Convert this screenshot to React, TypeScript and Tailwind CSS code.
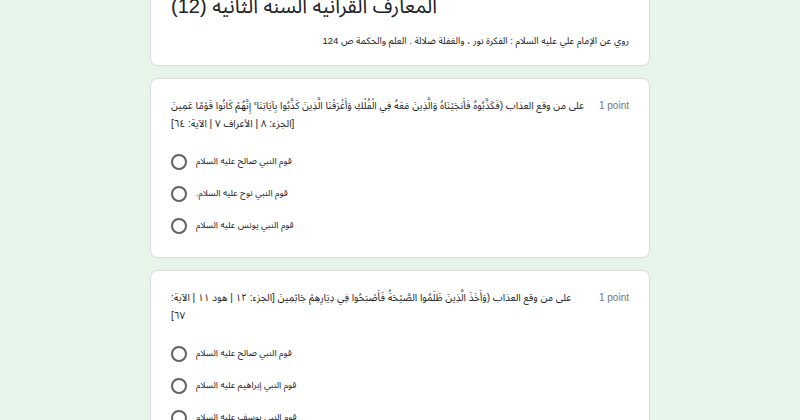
const FONT = "font-['Liberation_Sans','Noto_Sans_Arabic','DejaVu_Sans_Condensed','DejaVu_Sans',sans-serif]";

interface Question {
  title: string;
  points: string;
  options: string[];
}

const QUESTIONS: Question[] = [
  {
    title:
      "على من وقع العذاب (فَكَذَّبُوهُ فَأَنجَيْنَاهُ وَالَّذِينَ مَعَهُ فِي الْفُلْكِ وَأَغْرَقْنَا الَّذِينَ كَذَّبُوا بِآيَاتِنَا ۚ إِنَّهُمْ كَانُوا قَوْمًا عَمِينَ [الجزء: ٨ | الأعراف ٧ | الآية: ٦٤]",
    points: "1 point",
    options: [
      "قوم النبي صالح عليه السلام",
      "قوم النبي نوح عليه السلام.",
      "قوم النبي يونس عليه السلام",
    ],
  },
  {
    title:
      "على من وقع العذاب (وَأَخَذَ الَّذِينَ ظَلَمُوا الصَّيْحَةُ فَأَصْبَحُوا فِي دِيَارِهِمْ جَاثِمِينَ [الجزء: ١٢ | هود ١١ | الآية: ٦٧]",
    points: "1 point",
    options: [
      "قوم النبي صالح عليه السلام",
      "قوم النبي إبراهيم عليه السلام",
      "قوم النبي يوسف عليه السلام",
    ],
  },
];

function QuestionCard({ q }: { q: Question }) {
  return (
    <section className="rounded-lg border border-[#dadce0] bg-white px-5 pt-[18px] pb-[15px]">
      <div className="flex items-start justify-between">
        <div dir="rtl" className="w-[414px] text-left text-[10px] leading-[18px] text-[#202124]">
          {q.title}
        </div>
        <span className="shrink-0 text-[10px] leading-[18px] text-[#70757a]">{q.points}</span>
      </div>

      <div className="mt-[13px] flex flex-col">
        {q.options.map((opt) => (
          <label key={opt} className="flex h-8 items-center gap-[9px]">
            <span className="h-4 w-4 shrink-0 rounded-full border-2 border-[#5f6368]" />
            <span dir="rtl" className="text-[9px] text-[#202124]">{opt}</span>
          </label>
        ))}
      </div>
    </section>
  );
}

export default function App() {
  return (
    <div className={`min-h-screen overflow-hidden bg-[#e6f4ea] ${FONT}`}>
      <main className="mx-auto flex w-[500px] flex-col gap-3 pb-10">
        {/* form header, page is scrolled so the top is cut off */}
        <section className="-mt-[33px] rounded-lg border border-[#dadce0] bg-white px-5 pt-[22px] pb-4">
          <h1 dir="rtl" className="text-left text-[20px] leading-[32px] text-[#202124]">
            المعارف القرانيه السنه الثانيه (12)
          </h1>
          <p dir="rtl" className="mt-[11px] text-[9.5px] leading-4 text-[#202124]">
            روي عن الإمام علي عليه السلام : الفكرة نور ، والغفلة ضلالة . العلم والحكمة ص 124
          </p>
        </section>

        {QUESTIONS.map((q, i) => (
          <QuestionCard key={i} q={q} />
        ))}
      </main>
    </div>
  );
}
